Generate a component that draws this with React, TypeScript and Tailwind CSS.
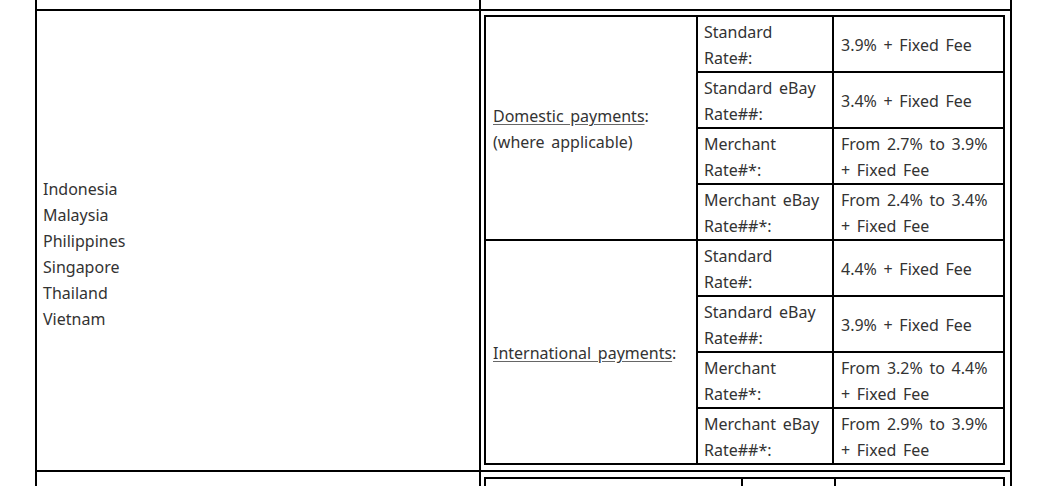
import React from "react";

type Rate = { label: React.ReactNode; value: React.ReactNode };

const domestic: Rate[] = [
  { label: <>Standard<br />Rate#:</>, value: <>3.9% + Fixed Fee</> },
  { label: <>Standard eBay<br />Rate##:</>, value: <>3.4% + Fixed Fee</> },
  { label: <>Merchant<br />Rate#*:</>, value: <>From 2.7% to 3.9%<br />+ Fixed Fee</> },
  { label: <>Merchant eBay<br />Rate##*:</>, value: <>From 2.4% to 3.4%<br />+ Fixed Fee</> },
];

const international: Rate[] = [
  { label: <>Standard<br />Rate#:</>, value: <>4.4% + Fixed Fee</> },
  { label: <>Standard eBay<br />Rate##:</>, value: <>3.9% + Fixed Fee</> },
  { label: <>Merchant<br />Rate#*:</>, value: <>From 3.2% to 4.4%<br />+ Fixed Fee</> },
  { label: <>Merchant eBay<br />Rate##*:</>, value: <>From 2.9% to 3.9%<br />+ Fixed Fee</> },
];

function Group({ title, rates, last }: { title: React.ReactNode; rates: Rate[]; last?: boolean }) {
  return (
    <div className={`flex ${last ? "" : "border-b-2 border-black"}`}>
      <div className="w-[212px] shrink-0 border-r-2 border-black flex items-center pl-[7px] pt-[2px]">
        <div>{title}</div>
      </div>
      <div className="flex flex-col">
        {rates.map((r, i) => (
          <div
            key={i}
            className={`flex h-[54px] box-content ${i < rates.length - 1 ? "border-b-2 border-black" : ""}`}
          >
            <div className="w-[136px] shrink-0 border-r-2 border-black flex items-center pl-[6px] pt-[2px] whitespace-nowrap">
              <div>{r.label}</div>
            </div>
            <div className="w-[169px] shrink-0 flex items-center pl-[7px] pt-[2px] whitespace-nowrap">
              <div>{r.value}</div>
            </div>
          </div>
        ))}
      </div>
    </div>
  );
}

export default function App() {
  return (
    <div className="w-[1042px] h-[486px] overflow-hidden bg-white pl-[35px] font-['Noto_Sans',sans-serif] text-[16px] leading-[26px] text-[#333] [word-spacing:2.5px]">
      <div className="w-[977px] border-l-2 border-r-2 border-black">
        {/* top row (cut off) */}
        <div className="flex h-[11px] border-b-2 border-black">
          <div className="w-[444px] shrink-0 border-r-2 border-black" />
          <div className="flex-1" />
        </div>
        {/* main row */}
        <div className="flex h-[461px] border-b-2 border-black">
          <div className="w-[444px] shrink-0 border-r-2 border-black flex items-center pl-[6px] pt-[27px]">
            <div>
              Indonesia<br />
              Malaysia<br />
              Philippines<br />
              Singapore<br />
              Thailand<br />
              Vietnam
            </div>
          </div>
          <div className="flex-1 pl-[3px] pt-[4px]">
            <div className="w-[521px] border-2 border-black">
              <Group
                title={
                  <>
                    <span className="underline decoration-[#666] underline-offset-2">Domestic payments</span>:<br />
                    (where applicable)
                  </>
                }
                rates={domestic}
              />
              <Group
                title={
                  <>
                    <span className="underline decoration-[#666] underline-offset-2">International payments</span>:
                  </>
                }
                rates={international}
                last
              />
            </div>
          </div>
        </div>
        {/* next row (cut off) */}
        <div className="flex h-[40px]">
          <div className="w-[444px] shrink-0 border-r-2 border-black" />
          <div className="flex-1 pl-[3px] pt-[5px]">
            <div className="w-[521px] h-[40px] border-t-2 border-l-2 border-r-2 border-black flex">
              <div className="w-[257px] shrink-0 border-r-2 border-black" />
              <div className="w-[93px] shrink-0 border-r-2 border-black" />
              <div className="flex-1" />
            </div>
          </div>
        </div>
      </div>
    </div>
  );
}
